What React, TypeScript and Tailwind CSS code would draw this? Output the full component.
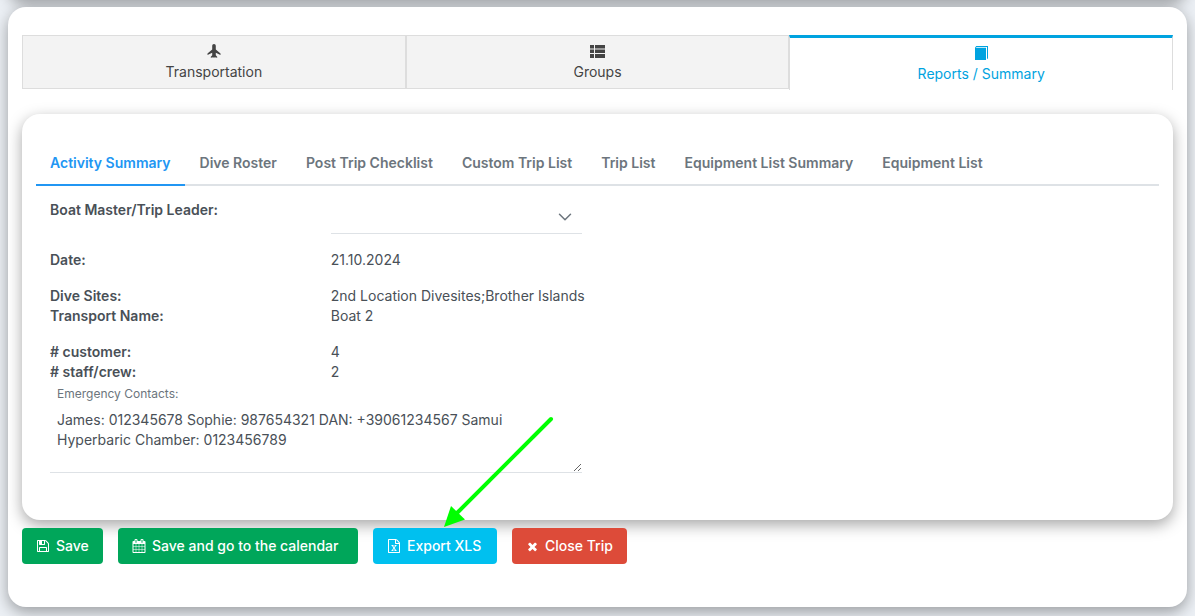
import type { ReactNode } from 'react';

function Glyph({ d, className = 'size-[14px]' }: { d: string; className?: string }) {
  return (
    <svg viewBox="0 0 1792 1792" className={className} fill="currentColor" aria-hidden="true">
      <path d={d} />
    </svg>
  );
}

const floppy =
  'M512 1536h768v-384h-768v384zm896 0h128v-896q0-14-10-38.5t-20-34.5l-281-281q-10-10-34-20t-39-10v416q0 40-28 68t-68 28h-576q-40 0-68-28t-28-68v-416h-128v1280h128v-416q0-40 28-68t68-28h832q40 0 68 28t28 68v416zm-384-928v-320q0-13-9.5-22.5t-22.5-9.5h-192q-13 0-22.5 9.5t-9.5 22.5v320q0 13 9.5 22.5t22.5 9.5h192q13 0 22.5-9.5t9.5-22.5zm640 32v928q0 40-28 68t-68 28h-1344q-40 0-68-28t-28-68v-1344q0-40 28-68t68-28h928q40 0 88 20t76 48l280 280q28 28 48 76t20 88z';
const calendar =
  'M192 1664h288v-288h-288v288zm352 0h320v-288h-320v288zm-352-352h288v-320h-288v320zm352 0h320v-320h-320v320zm-352-384h288v-288h-288v288zm736 736h320v-288h-320v288zm-384-736h320v-288h-320v288zm768 736h288v-288h-288v288zm-384-352h320v-320h-320v320zm-352-864v-288q0-13-9.5-22.5t-22.5-9.5h-64q-13 0-22.5 9.5t-9.5 22.5v288q0 13 9.5 22.5t22.5 9.5h64q13 0 22.5-9.5t9.5-22.5zm736 864h288v-320h-288v320zm-384-384h320v-288h-320v288zm384 0h288v-288h-288v288zm32-480v-288q0-13-9.5-22.5t-22.5-9.5h-64q-13 0-22.5 9.5t-9.5 22.5v288q0 13 9.5 22.5t22.5 9.5h64q13 0 22.5-9.5t9.5-22.5zm384-64v1280q0 52-38 90t-90 38h-1408q-52 0-90-38t-38-90v-1280q0-52 38-90t90-38h128v-96q0-66 47-113t113-47h64q66 0 113 47t47 113v96h384v-96q0-66 47-113t113-47h64q66 0 113 47t47 113v96h128q52 0 90 38t38 90z';
const excel =
  'M1596 380q28 28 48 76t20 88v1152q0 40-28 68t-68 28h-1344q-40 0-68-28t-28-68v-1600q0-40 28-68t68-28h896q40 0 88 20t76 48zm-444-244v376h376q-10-29-22-41l-313-313q-12-12-41-22zm384 1528v-1024h-416q-40 0-68-28t-28-68v-416h-768v1536h1280zm-979-234v106h281v-106h-75l103-161q5-7 10-16.5t7.5-13.5 3.5-4h2q1 4 5 10 2 4 4.5 7.5t6 8 6.5 8.5l107 161h-76v106h291v-106h-68l-192-273 195-282h67v-107h-279v107h74l-103 159q-4 7-10 16.5t-9 13.5l-2 3h-2q-1-4-5-10-6-11-17-23l-106-159h76v-107h-290v107h68l189 272-194 283h-68z';
const times =
  'M1490 1322q0 40-28 68l-136 136q-28 28-68 28t-68-28l-294-294-294 294q-28 28-68 28t-68-28l-136-136q-28-28-28-68t28-68l294-294-294-294q-28-28-28-68t28-68l136-136q28-28 68-28t68 28l294 294 294-294q28-28 68-28t68 28l136 136q28 28 28 68t-28 68l-294 294 294 294q28 28 28 68z';

const reportTabs = [
  'Activity Summary',
  'Dive Roster',
  'Post Trip Checklist',
  'Custom Trip List',
  'Trip List',
  'Equipment List Summary',
  'Equipment List',
];

function MainTab({ label, active, icon }: { label: string; active?: boolean; icon: ReactNode }) {
  return (
    <button
      type="button"
      role="tab"
      aria-selected={!!active}
      className={
        active
          ? 'flex flex-1 flex-col items-center gap-1 border-x border-t-3 border-x-[#ddd] border-t-[#00a3e0] bg-white pt-2 pb-1.5 text-[#00a3e0]'
          : 'mb-px flex flex-1 flex-col items-center gap-1 border border-[#ddd] bg-[#f3f3f3] pt-2 text-[#444]'
      }
    >
      {icon}
      <span className="leading-5">{label}</span>
    </button>
  );
}

function Row({ label, children }: { label: string; children: ReactNode }) {
  return (
    <div className="grid grid-cols-4">
      <dt className="px-3.5 font-semibold">{label}</dt>
      <dd className="pl-3.5 whitespace-nowrap">{children}</dd>
    </div>
  );
}

function Action({ label, icon, className }: { label: string; icon: ReactNode; className: string }) {
  return (
    <button
      type="button"
      className={`flex h-9 items-center gap-1.5 rounded pr-3 pl-3.5 font-medium whitespace-nowrap text-white ${className}`}
    >
      {icon}
      {label}
    </button>
  );
}

export default function App() {
  return (
    <div className="min-h-screen overflow-hidden bg-[#ecf0f5] px-2 pb-2 font-['Inter',sans-serif] text-sm leading-5 text-[#495057]">
      <div className="-mt-10 mb-2 h-[39px] rounded-[18px] bg-white shadow-[0_5px_15px_rgba(0,0,0,0.35)]" />
      <main className="rounded-[18px] bg-white px-3.5 pt-7 pb-[43px] shadow-[0_5px_15px_rgba(0,0,0,0.35)]">
        <div role="tablist" className="flex">
          <MainTab
            label="Transportation"
            icon={
              <svg viewBox="0 0 14 14" className="size-[14px]" fill="currentColor" aria-hidden="true">
                <path d="M7 0C8.1 0 8.8.8 8.8 2V5.4L13.5 9.6V11L8.8 8.8V11.200L10.2 12.7V13.8L7.6 13.200L7 14L6.4 13.200L3.8 13.8V12.7L5.2 11.200V8.8L.5 11V9.600L5.2 5.4V2C5.2.8 5.9 0 7 0Z" />
              </svg>
            }
          />
          <MainTab
            label="Groups"
            icon={
              <svg viewBox="0 0 15 14" className="h-[14px] w-[15px]" fill="currentColor" aria-hidden="true">
                <path d="M0 1h4v3.500H0zM5 1h10v3.500H5zM0 5.500h4v3.500H0zM5 5.500h10v3.500H5zM0 10h4v4H0zM5 10h10v4H5z" />
              </svg>
            }
          />
          <MainTab
            active
            label="Reports / Summary"
            icon={
              <svg viewBox="0 0 14 14" className="size-[14px]" fill="currentColor" aria-hidden="true">
                <path d="M2.2 0H14V12.2L13 13.2V1H2.5L1.8 1.8H12V14H1V1.8Z" />
              </svg>
            }
          />
        </div>

        <section className="mt-6 rounded-[18px] bg-white px-3.5 pt-7 pb-[47px] shadow-[0_5px_15px_rgba(0,0,0,0.35)]">
          <div role="tablist" className="flex gap-px border-b-2 border-[#dee2e6]">
            {reportTabs.map((tab, i) => (
              <button
                key={tab}
                type="button"
                role="tab"
                aria-selected={i === 0}
                className={
                  i === 0
                    ? '-mb-0.5 border-b-2 border-[#2196f3] px-3.5 pt-[11px] pb-[11px] font-semibold whitespace-nowrap text-[#2196f3]'
                    : 'px-3.5 pt-[11px] pb-[11px] font-semibold whitespace-nowrap text-[#6c757d]'
                }
              >
                {tab}
              </button>
            ))}
          </div>

          <div className="mt-3.5 grid grid-cols-4">
            <label htmlFor="leader" className="px-3.5 font-semibold">
              Boat Master/Trip Leader:
            </label>
            <div className="relative mr-4 ml-3.5">
              <select id="leader" className="block h-[34px] w-full appearance-none border-b border-[#dee2e6] bg-transparent">
                <option value=""></option>
              </select>
              <svg
                viewBox="0 0 14 14"
                className="pointer-events-none absolute top-2.5 right-2.5 size-[14px] text-[#6c757d]"
                fill="none"
                stroke="currentColor"
                strokeWidth="1.5"
                strokeLinecap="round"
                strokeLinejoin="round"
                aria-hidden="true"
              >
                <path d="M1.5 4.2L7 9.7L12.5 4.2" />
              </svg>
            </div>
          </div>

          <dl className="mt-4">
            <Row label="Date:">21.10.2024</Row>
            <div className="mt-4">
              <Row label="Dive Sites:">2nd Location Divesites;Brother Islands</Row>
              <Row label="Transport Name:">Boat 2</Row>
            </div>
            <div className="mt-4">
              <Row label="# customer:">4</Row>
              <Row label="# staff/crew:">2</Row>
            </div>
          </dl>

          <div className="w-1/2 pt-1 pr-4 pl-3.5">
            <label htmlFor="contacts" className="block px-[7px] text-xs leading-4 text-[#6c757d]">
              Emergency Contacts:
            </label>
            <textarea
              id="contacts"
              className="mt-1 block h-[67px] w-full resize border-b border-[#dee2e6] px-[7px] py-1"
              defaultValue={'James: 012345678 Sophie: 987654321 DAN: +39061234567 Samui\nHyperbaric Chamber: 0123456789'}
            />
          </div>
        </section>

        <div className="mt-2 flex flex-wrap gap-[15px]">
          <Action label="Save" className="min-w-[81px] bg-[#00a65a]" icon={<Glyph d={floppy} />} />
          <Action label="Save and go to the calendar" className="min-w-[240px] bg-[#00a65a]" icon={<Glyph d={calendar} />} />
          <div className="relative">
            <Action label="Export XLS" className="min-w-[124px] bg-[#00c0ef]" icon={<Glyph d={excel} />} />
            <svg
              viewBox="0 0 112 114"
              className="pointer-events-none absolute bottom-full left-[70px] h-[114px] w-[112px]"
              aria-hidden="true"
            >
              <path d="M108 5L14 99" stroke="#00ff00" strokeWidth="4" strokeLinecap="round" />
              <path d="M1 113L8 92L22 105.500Z" fill="#00ff00" />
            </svg>
          </div>
          <Action label="Close Trip" className="min-w-[115px] bg-[#dd4b39]" icon={<Glyph d={times} className="size-[13px]" />} />
        </div>
      </main>
    </div>
  );
}
